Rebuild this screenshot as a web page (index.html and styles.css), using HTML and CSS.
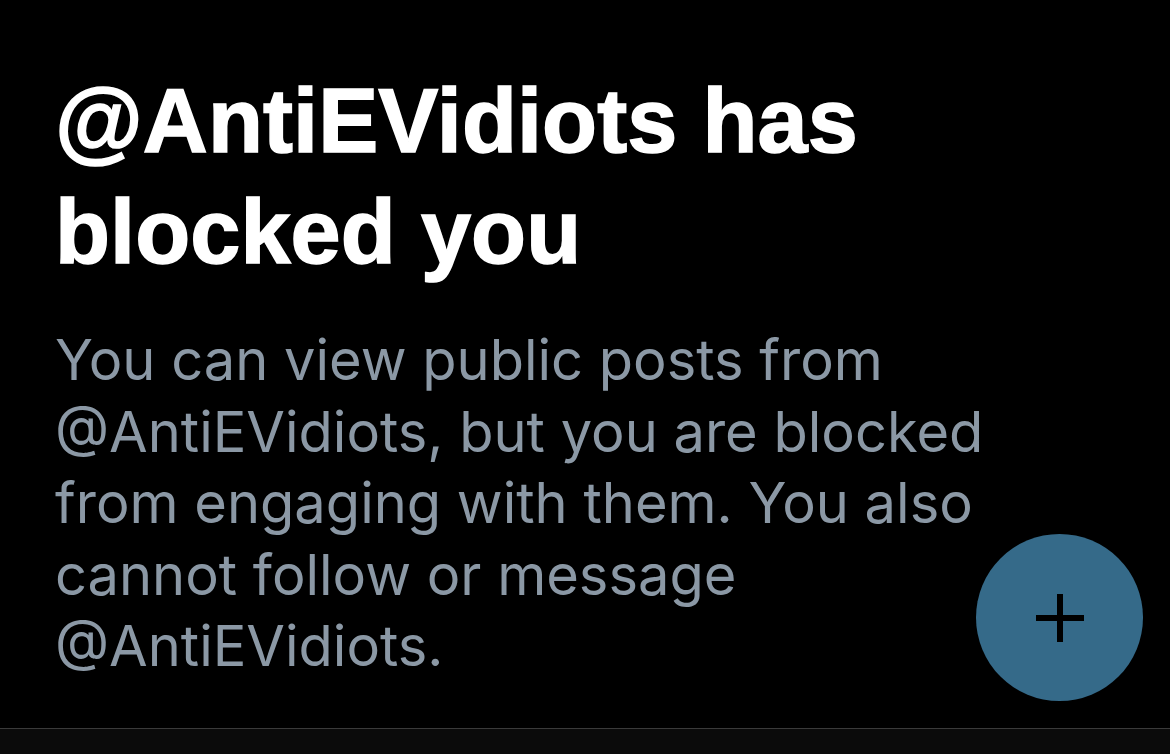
FILE: index.html
```html
<!DOCTYPE html>
<html lang="en">
<head>
    <meta charset="UTF-8">
    <meta name="viewport" content="width=device-width, initial-scale=1.0">
    <title>@AntiEVidiots has blocked you</title>
    <link rel="stylesheet" href="styles.css">
</head>
<body>
    <main class="blocked">
        <h1 class="blocked-title">@AntiEVidiots has blocked you</h1>
        <p class="blocked-text">You can view public posts from @AntiEVidiots, but you are blocked from engaging with them. You also cannot follow or message @AntiEVidiots.</p>
    </main>

    <button class="fab" aria-label="Compose">
        <svg viewBox="0 0 48 48" width="48" height="48">
            <path d="M24 0v48M0 24h48" stroke="#000" stroke-width="6" fill="none"/>
        </svg>
    </button>

    <nav class="tabbar"></nav>
</body>
</html>
```

FILE: styles.css
```css
html, body {
    margin: 0;
    height: 100%;
    background: #000;
}
body {
    display: flex;
    flex-direction: column;
    font-family: "Liberation Sans", Roboto, sans-serif;
    overflow: hidden;
}
.blocked {
    flex: 1;
    padding: 66px 0 0 55px;
    max-width: 980px;
}
.blocked-title {
    margin: 0;
    color: #fff;
    font-size: 90px;
    line-height: 111px;
    font-weight: bold;
    letter-spacing: 0.1px;
    -webkit-text-stroke: 1.5px #fff;
}
.blocked-text {
    margin: 37px 0 0;
    color: #8b98a5;
    font-family: Inter, sans-serif;
    font-size: 56px;
    line-height: 71.5px;
}
.fab {
    position: fixed;
    left: 976px;
    top: 534px;
    width: 167px;
    height: 167px;
    border: none;
    border-radius: 50%;
    background: #356a89;
    display: flex;
    align-items: center;
    justify-content: center;
    padding: 0;
}
.tabbar {
    height: 25px;
    border-top: 1px solid #3a3a3a;
    background: #0b0b0b;
}
```
